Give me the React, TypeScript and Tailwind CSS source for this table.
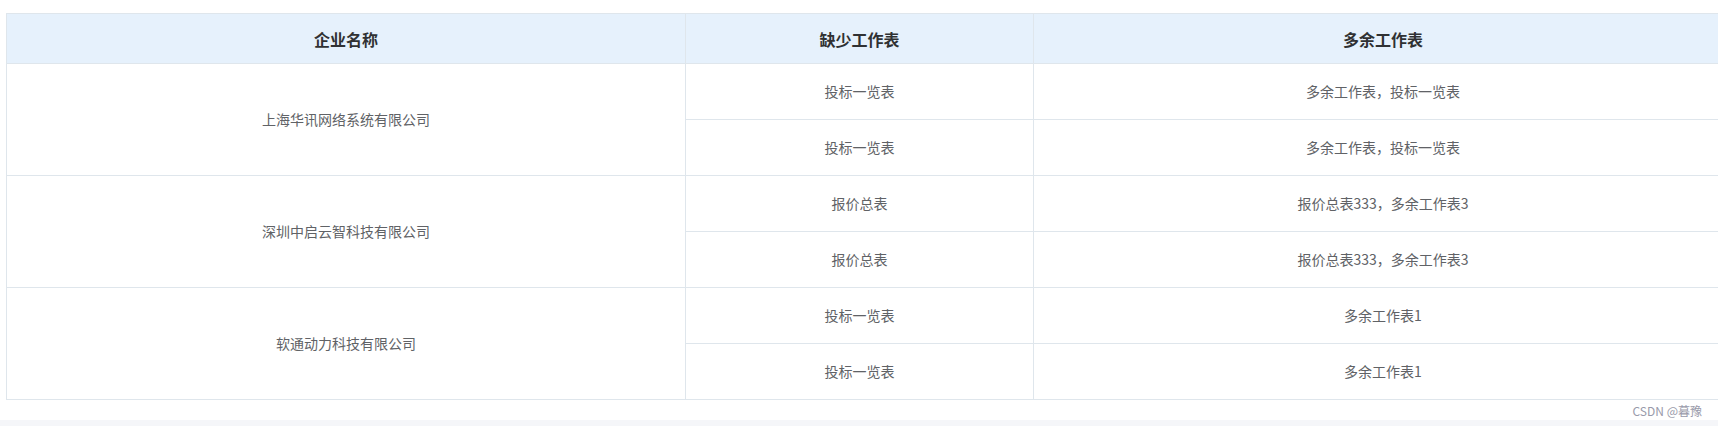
const rows = [
  {
    name: "上海华讯网络系统有限公司",
    items: [
      ["投标一览表", "多余工作表，投标一览表"],
      ["投标一览表", "多余工作表，投标一览表"],
    ],
  },
  {
    name: "深圳中启云智科技有限公司",
    items: [
      ["报价总表", "报价总表333，多余工作表3"],
      ["报价总表", "报价总表333，多余工作表3"],
    ],
  },
  {
    name: "软通动力科技有限公司",
    items: [
      ["投标一览表", "多余工作表1"],
      ["投标一览表", "多余工作表1"],
    ],
  },
];

export default function App() {
  return (
    <div
      className="w-[1718px] h-[426px] overflow-hidden bg-white relative"
      style={{ fontFamily: '"Microsoft YaHei", "Noto Sans CJK SC", sans-serif' }}
    >
      <div className="pl-[6px] pt-[13px] h-[420px]">
        <table className="w-[1726px] border-collapse table-fixed text-center">
          <colgroup>
            <col className="w-[679px]" />
            <col className="w-[348px]" />
            <col className="w-[699px]" />
          </colgroup>
          <thead>
            <tr className="bg-[#e6f1fc]">
              <th className="h-[50px] p-0 border border-[#dfe6ec] text-[16px] font-bold text-[#303133]">企业名称</th>
              <th className="h-[50px] p-0 border border-[#dfe6ec] text-[16px] font-bold text-[#303133]">缺少工作表</th>
              <th className="h-[50px] p-0 border border-[#dfe6ec] text-[16px] font-bold text-[#303133]">多余工作表</th>
            </tr>
          </thead>
          <tbody className="text-[14px] text-[#606266]">
            {rows.map((r) =>
              r.items.map((it, i) => (
                <tr key={r.name + i}>
                  {i === 0 && (
                    <td rowSpan={2} className="p-0 border border-[#dfe6ec]">
                      {r.name}
                    </td>
                  )}
                  <td className="h-[56px] p-0 border border-[#dfe6ec]">{it[0]}</td>
                  <td className="h-[56px] p-0 border border-[#dfe6ec]">{it[1]}</td>
                </tr>
              ))
            )}
          </tbody>
        </table>
      </div>
      <div className="h-[6px] bg-[#f5f6f9]" />
      <span className="absolute right-[16px] top-[403px] text-[12px] leading-[16px] text-[#999aaa]">
        CSDN @暮豫
      </span>
    </div>
  );
}
